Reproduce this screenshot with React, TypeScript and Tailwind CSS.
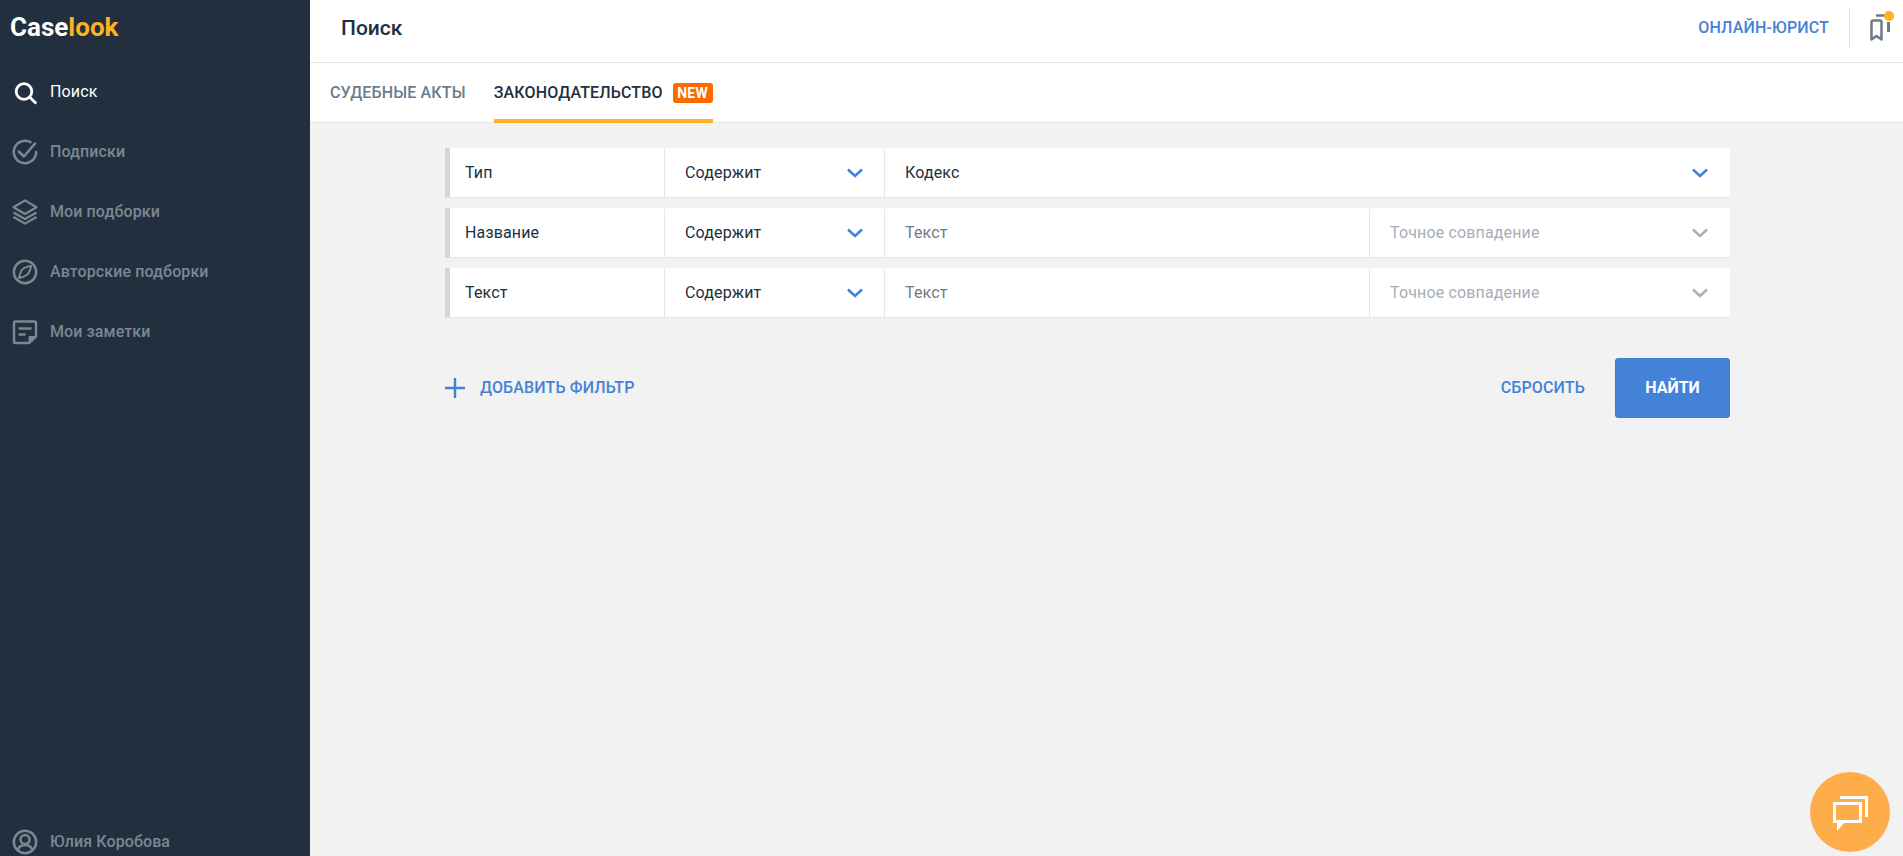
import type { ReactNode } from "react";

const font = { fontFamily: "Roboto, sans-serif" };

function SearchIcon() {
  return (
    <svg width="26" height="26" viewBox="0 0 26 26" fill="none" stroke="currentColor" strokeWidth="2.8">
      <circle cx="12" cy="12.5" r="7.8" />
      <path d="M17.800 18.200l6.400 6.300" />
    </svg>
  );
}

function CheckIcon() {
  return (
    <svg width="26" height="26" viewBox="0 0 26 26" fill="none" stroke="currentColor" strokeWidth="2.5">
      <path d="M18.500 3.200A11.200 11.200 0 1 0 24.200 13" strokeLinecap="round" />
      <path d="M6.800 12.500l5.200 5L23 4.500" strokeLinecap="round" strokeLinejoin="round" />
    </svg>
  );
}

function LayersIcon() {
  return (
    <svg width="26" height="26" viewBox="0 0 26 26" fill="none" stroke="currentColor" strokeWidth="2.2" strokeLinejoin="round">
      <path d="M13 1.400L24.500 8.200 13 15 1.500 8.200z" />
      <path d="M1.500 13.500L13 20l11.500-6.500" />
      <path d="M1.500 18L13 24.600 24.500 18" />
    </svg>
  );
}

function CompassIcon() {
  return (
    <svg width="26" height="26" viewBox="0 0 26 26" fill="none" stroke="currentColor" strokeWidth="2.5" strokeLinejoin="round">
      <circle cx="13" cy="13" r="11.200" />
      <path d="M19 7c-4.500.5-8 2-9.500 4.500C8.200 13.500 7.500 16.500 7 19c3-.5 6-1.700 8.300-3.500C17.500 13.500 18.500 10 19 7z" strokeWidth="2" />
    </svg>
  );
}

function NoteIcon() {
  return (
    <svg width="26" height="26" viewBox="0 0 26 26" fill="none" stroke="currentColor" strokeWidth="2.5" strokeLinejoin="round">
      <path d="M3.500 2.500h19a1.500 1.500 0 0 1 1.500 1.500v13.500L17 24H3.500A1.500 1.500 0 0 1 2 22.500V4a1.500 1.500 0 0 1 1.500-1.500z" />
      <path d="M6.500 9.500h13M6.500 15.500h7" />
      <path d="M17 24v-6.500h7z" fill="currentColor" strokeWidth="1" />
    </svg>
  );
}

function UserIcon() {
  return (
    <svg width="26" height="26" viewBox="0 0 26 26" fill="none" stroke="currentColor" strokeWidth="2.5">
      <circle cx="13" cy="13" r="11.200" />
      <circle cx="13" cy="10.500" r="4.500" />
      <path d="M5.500 21.500c1-3.500 3.800-5.500 7.500-5.500s6.500 2 7.500 5.500" />
    </svg>
  );
}

function Chevron({ color }: { color: string }) {
  return (
    <svg width="16" height="10" viewBox="0 0 16 10" fill="none" stroke="currentColor" strokeWidth="2.6" className={color}>
      <path d="M1 1.500l7 6.500 7-6.500" />
    </svg>
  );
}

function NavItem({ icon, label, active }: { icon: ReactNode; label: string; active?: boolean }) {
  return (
    <div className={active ? "flex h-[60px] items-center text-white" : "flex h-[60px] items-center text-[#7d8791]"}>
      <span className="flex w-[50px] justify-center">{icon}</span>
      <span className={active ? "text-[16px] tracking-[0.15px]" : "text-[16px] font-medium tracking-[0.1px]"}>{label}</span>
    </div>
  );
}

function FilterRow({ name, value, placeholder }: { name: string; value?: string; placeholder?: string }) {
  return (
    <div className="flex h-[50px] border-b border-l-[5px] border-b-[#e3e4e5] border-l-[#cfd6dc] bg-white pt-[1px] text-[16px] tracking-[0.15px] text-[#212f3e]">
      <div className="flex w-[215px] items-center border-r border-[#e6e7e8] pl-[15px]">{name}</div>
      <div className="flex w-[220px] items-center justify-between border-r border-[#e6e7e8] pl-[20px] pr-[21px]">
        <span>Содержит</span>
        <Chevron color="text-[#4482d8]" />
      </div>
      {value ? (
        <div className="flex flex-1 items-center justify-between pl-[20px] pr-[22px]">
          <span>{value}</span>
          <Chevron color="text-[#4482d8]" />
        </div>
      ) : (
        <>
          <div className="flex w-[485px] items-center border-r border-[#e6e7e8] pl-[20px] text-[#70798a]">{placeholder}</div>
          <div className="flex flex-1 items-center justify-between pl-[20px] pr-[22px] text-[#a7adb8]">
            <span>Точное совпадение</span>
            <Chevron color="text-[#aab0bb]" />
          </div>
        </>
      )}
    </div>
  );
}

export default function App() {
  return (
    <div className="flex h-[856px] overflow-hidden bg-[#f2f2f2]" style={font}>
      <aside className="flex w-[310px] shrink-0 flex-col bg-[#212f3e]">
        <div className="h-[62px] pl-[10px] pt-[9px] text-[26px] font-bold leading-[36px] text-white">
          Case<span className="text-[#fdb320]">look</span>
        </div>
        <nav className="flex flex-1 flex-col">
          <NavItem icon={<SearchIcon />} label="Поиск" active />
          <NavItem icon={<CheckIcon />} label="Подписки" />
          <NavItem icon={<LayersIcon />} label="Мои подборки" />
          <NavItem icon={<CompassIcon />} label="Авторские подборки" />
          <NavItem icon={<NoteIcon />} label="Мои заметки" />
        </nav>
        <div className="-mb-[16px]">
          <NavItem icon={<UserIcon />} label="Юлия Коробова" />
        </div>
      </aside>

      <main className="relative flex min-w-0 flex-1 flex-col">
        <header className="flex h-[63px] items-center border-b border-[#e3e4e5] bg-white pb-[6px] pl-[31px]">
          <h1 className="flex-1 pt-[2px] text-[21px] font-medium text-[#212f3e]">Поиск</h1>
          <a className="text-[16px] font-medium tracking-[0.15px] text-[#4482d8]">ОНЛАЙН-ЮРИСТ</a>
          <div className="ml-[20px] h-[40px] w-px self-center bg-[#dfe1e3]" />
          <div className="flex w-[53px] justify-start pl-[20px]">
            <svg width="26" height="28" viewBox="0 0 26 28" fill="none" stroke="#6f7a88" strokeWidth="2.5" className="overflow-visible">
              <path d="M1.500 25.500V8a1.500 1.500 0 0 1 1.500-1.500h7A1.500 1.500 0 0 1 11.500 8v17.500l-5-3.500z" strokeLinejoin="round" />
              <path d="M6 1.500h11" />
              <path d="M18.500 8v10" strokeWidth="3" />
              <circle cx="19" cy="2" r="5" fill="#fdb320" stroke="none" />
            </svg>
          </div>
        </header>

        <div className="flex h-[60px] items-stretch border-b border-[#e3e4e5] bg-white pl-[20px] text-[16px] font-medium tracking-[0.15px]">
          <div className="flex items-center text-[#6b7c90]">СУДЕБНЫЕ АКТЫ</div>
          <div className="relative ml-[28px] flex items-center text-[#212f3e]">
            ЗАКОНОДАТЕЛЬСТВО
            <span className="ml-[10px] w-[40px] rounded-[3px] bg-[#fd6a02] text-center text-[14px] font-bold leading-[20px] text-white">NEW</span>
            <span className="absolute -bottom-px left-0 right-0 h-[4px] bg-[#fdb320]" />
          </div>
        </div>

        <section className="ml-[135px] w-[1285px] pt-[25px]">
          <div className="flex flex-col gap-[10px]">
            <FilterRow name="Тип" value="Кодекс" />
            <FilterRow name="Название" placeholder="Текст" />
            <FilterRow name="Текст" placeholder="Текст" />
          </div>
          <div className="mt-[40px] flex items-center">
            <svg width="20" height="20" viewBox="0 0 20 20" stroke="#4482d8" strokeWidth="2.5">
              <path d="M10 0v20M0 10h20" />
            </svg>
            <span className="ml-[15px] flex-1 text-[16px] font-medium tracking-[0.15px] text-[#4482d8]">ДОБАВИТЬ ФИЛЬТР</span>
            <span className="mr-[30px] text-[16px] font-medium tracking-[0.15px] text-[#4482d8]">СБРОСИТЬ</span>
            <button className="h-[60px] w-[115px] rounded-[3px] border border-[#3f7bce] bg-[#4482d8] text-[16px] font-bold text-white">НАЙТИ</button>
          </div>
        </section>

        <div className="absolute bottom-[4px] right-[13px] flex h-[80px] w-[80px] items-center justify-center rounded-full bg-[#ffad4a] pt-[3px]">
          <svg width="35" height="35" viewBox="0 0 35 35" fill="none" stroke="white" strokeWidth="3">
            <path d="M7 1.500h26.500V21" />
            <path d="M1.500 7.500h26v18h-26z" />
            <path d="M4 26v9l8-9z" fill="white" stroke="none" />
          </svg>
        </div>
      </main>
    </div>
  );
}
